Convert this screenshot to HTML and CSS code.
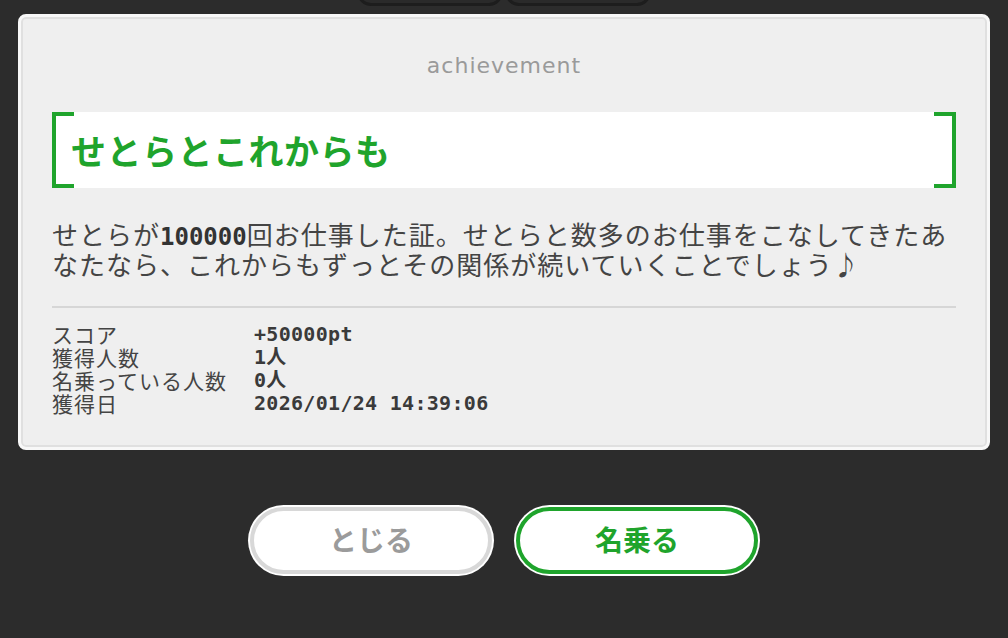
FILE: index.html
```html
<html>
<head>
  <title>achievement</title>
  <link rel="stylesheet" href="styles.css">
</head>
<body>
  <div class="tabs">
    <span class="tab"></span>
    <span class="tab"></span>
  </div>
  <section class="card">
    <p class="kind">achievement</p>
    <h1 class="title">せとらとこれからも</h1>
    <p class="desc">せとらが<b>100000</b>回お仕事した証。せとらと数多のお仕事をこなしてきたあなたなら、これからもずっとその関係が続いていくことでしょう♪</p>
    <dl class="stats">
      <dt>スコア</dt><dd>+50000pt</dd>
      <dt>獲得人数</dt><dd>1人</dd>
      <dt>名乗っている人数</dt><dd>0人</dd>
      <dt>獲得日</dt><dd>2026/01/24 14:39:06</dd>
    </dl>
  </section>
  <div class="actions">
    <button class="btn btn-close">とじる</button>
    <button class="btn btn-use">名乗る</button>
  </div>
</body>
</html>
```

FILE: styles.css
```css
body {
  margin: 0;
  padding: 0 18px;
  background: #2c2c2c;
  font-family: "Noto Sans CJK JP", "Noto Sans", sans-serif;
  color: #444;
}
.tabs {
  height: 6px;
  overflow: hidden;
  display: flex;
  justify-content: center;
  align-items: flex-end;
  gap: 2px;
}
.tab {
  width: 146px;
  height: 30px;
  flex: none;
  box-sizing: border-box;
  background: #2a2a2a;
  border: 3px solid #1d1d1d;
  border-radius: 0 0 14px 14px;
}
.card {
  margin-top: 8px;
  height: 436px;
  box-sizing: border-box;
  padding: 34px 31px 0;
  background: #efefef;
  border: 3px solid #f8f8f8;
  border-radius: 8px;
  box-shadow: inset 0 0 0 2px #e0e0e0;
}
.kind {
  margin: 0;
  text-align: center;
  font: 22px/30px "DejaVu Sans", sans-serif;
  letter-spacing: 1px;
  color: #9a9a9a;
}
.title {
  position: relative;
  margin: 31px 0 0;
  height: 76px;
  padding: 0 19px;
  background: #fff;
  font-size: 35px;
  line-height: 76px;
  letter-spacing: 0.5px;
  font-weight: bold;
  color: #1fa42c;
}
.title::before,
.title::after {
  content: "";
  position: absolute;
  top: 0;
  bottom: 0;
  width: 18px;
  border: 4px solid #1fa42c;
}
.title::before {
  left: 0;
  border-right: none;
}
.title::after {
  right: 0;
  border-left: none;
}
.desc {
  margin: 31px 0 0;
  font-size: 26px;
  line-height: 30px;
  letter-spacing: 1px;
  color: #444;
}
.desc b {
  font-family: "DejaVu Sans Mono", monospace;
  font-size: 24px;
  line-height: 16px;
  letter-spacing: 0;
  color: #333;
}
.stats {
  margin: 27px 0 0;
  padding-top: 15px;
  border-top: 2px solid #d6d6d6;
  display: grid;
  grid-template-columns: 202px 1fr;
  font-size: 21px;
  line-height: 23px;
  letter-spacing: 1px;
}
.stats dt {
  color: #444;
}
.stats dd {
  margin: 0;
  font-family: "DejaVu Sans Mono", "Noto Sans CJK JP", monospace;
  font-size: 20px;
  font-weight: bold;
  letter-spacing: 0.3px;
  color: #3a3a3a;
}
.actions {
  margin-top: 57px;
  display: flex;
  justify-content: center;
  gap: 24px;
}
.btn {
  width: 242px;
  height: 67px;
  padding: 0 0 4px;
  border-radius: 34px;
  background: #fff;
  border: 4px solid #d8d8d8;
  box-shadow: 0 0 0 2px #fff;
  font-family: "Noto Sans CJK JP", sans-serif;
  font-size: 28px;
  font-weight: bold;
  color: #9b9b9b;
}
.btn-use {
  border-color: #1fa42c;
  color: #1fa42c;
}
```
